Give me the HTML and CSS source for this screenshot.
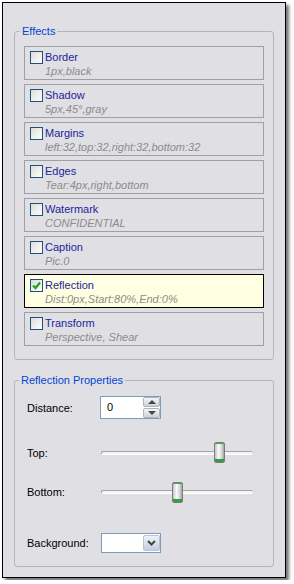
FILE: index.html
```html
<!DOCTYPE html>
<html lang="en">
<head>
  <meta charset="UTF-8" />
  <title>Effects</title>
  <link rel="stylesheet" href="styles.css">
</head>
<body>
  <div class="window">
    <fieldset class="group effects">
      <legend>Effects</legend>

      <div class="effect">
        <span class="check"></span>
        <div class="effect-text">
          <div class="effect-name">Border</div>
          <div class="effect-value">1px,black</div>
        </div>
      </div>

      <div class="effect">
        <span class="check"></span>
        <div class="effect-text">
          <div class="effect-name">Shadow</div>
          <div class="effect-value">5px,45°,gray</div>
        </div>
      </div>

      <div class="effect">
        <span class="check"></span>
        <div class="effect-text">
          <div class="effect-name">Margins</div>
          <div class="effect-value">left:32,top:32,right:32,bottom:32</div>
        </div>
      </div>

      <div class="effect">
        <span class="check"></span>
        <div class="effect-text">
          <div class="effect-name">Edges</div>
          <div class="effect-value">Tear:4px,right,bottom</div>
        </div>
      </div>

      <div class="effect">
        <span class="check"></span>
        <div class="effect-text">
          <div class="effect-name">Watermark</div>
          <div class="effect-value">CONFIDENTIAL</div>
        </div>
      </div>

      <div class="effect">
        <span class="check"></span>
        <div class="effect-text">
          <div class="effect-name">Caption</div>
          <div class="effect-value">Pic.0</div>
        </div>
      </div>

      <div class="effect selected">
        <span class="check checked">
          <svg width="11" height="11" viewBox="0 0 11 11"><path d="M2 5.5 L4.5 8 L9 2.5" fill="none" stroke="#21a121" stroke-width="2.2"/></svg>
        </span>
        <div class="effect-text">
          <div class="effect-name">Reflection</div>
          <div class="effect-value">Dist:0px,Start:80%,End:0%</div>
        </div>
      </div>

      <div class="effect">
        <span class="check"></span>
        <div class="effect-text">
          <div class="effect-name">Transform</div>
          <div class="effect-value">Perspective, Shear</div>
        </div>
      </div>
    </fieldset>

    <fieldset class="group props">
      <legend>Reflection Properties</legend>

      <div class="prop prop-distance">
        <label>Distance:</label>
        <div class="spinner">
          <span class="spin-value">0</span>
          <div class="spin-buttons">
            <span class="spin-btn up"></span>
            <span class="spin-btn down"></span>
          </div>
        </div>
      </div>

      <div class="prop prop-top">
        <label>Top:</label>
        <div class="slider">
          <div class="track"></div>
          <div class="thumb" style="left: 113px;"></div>
        </div>
      </div>

      <div class="prop prop-bottom">
        <label>Bottom:</label>
        <div class="slider">
          <div class="track"></div>
          <div class="thumb" style="left: 71px;"></div>
        </div>
      </div>

      <div class="prop prop-bg">
        <label>Background:</label>
        <div class="dropdown">
          <span class="drop-btn">
            <svg width="9" height="6" viewBox="0 0 9 6"><path d="M1 1 L4.5 4.5 L8 1" fill="none" stroke="#3b4a3b" stroke-width="2"/></svg>
          </span>
        </div>
      </div>
    </fieldset>
  </div>
</body>
</html>
```

FILE: styles.css
```css
* {
  margin: 0;
  padding: 0;
  box-sizing: border-box;
}

body {
  background: #fff;
  font-family: 'Liberation Sans', Arial, sans-serif;
  font-size: 11px;
  color: #000;
}

.window {
  width: 284px;
  height: 576px;
  margin: 2px;
  padding: 0 11px;
  background: #e0dfe3;
  border: 1px solid #000;
  box-shadow: 3px 3px 3px rgba(0, 0, 0, 0.55);
  overflow: hidden;
}

.group {
  border: 1px solid #b5b4ba;
  border-radius: 3px;
}

.group legend {
  color: #0046d5;
  line-height: 14px;
  padding: 0 2px;
}

.effects {
  margin-top: 21px;
  padding: 8px 9px 13px;
}

.effects legend {
  margin-left: -4px;
}

.effect {
  display: flex;
  gap: 2px;
  height: 34px;
  margin-bottom: 4px;
  padding: 3px 5px 0;
  border: 1px solid #a0a0a4;
}

.effect:last-child {
  margin-bottom: 0;
}

.effect.selected {
  background: #ffffe1;
  border-color: #000;
}

.check {
  width: 13px;
  height: 13px;
  margin-top: 1px;
  flex-shrink: 0;
  border: 1px solid #1c5180;
  background: linear-gradient(135deg, #dcdcd7, #fff);
  display: flex;
  align-items: center;
  justify-content: center;
}

.effect-name {
  color: #24249a;
  line-height: 14px;
}

.effect-value {
  color: #8c8c8c;
  font-style: italic;
  line-height: 14px;
  white-space: nowrap;
}

.props {
  margin-top: 13px;
  padding: 9px 12px 13px;
}

.props legend {
  margin-left: -8px;
}

.prop {
  display: flex;
  align-items: center;
}

.prop label {
  width: 73px;
  flex-shrink: 0;
}

.prop-distance { height: 23px; }
.prop-top { height: 21px; margin-top: 23px; }
.prop-bottom { height: 22px; margin-top: 18px; }
.prop-bg { height: 20px; margin-top: 30px; }

.spinner {
  width: 61px;
  height: 23px;
  border: 1px solid #7f9db9;
  background: #fff;
  display: flex;
  justify-content: space-between;
}

.spin-value {
  padding-left: 6px;
  line-height: 21px;
}

.spin-buttons {
  width: 17px;
  display: flex;
  flex-direction: column;
  gap: 1px;
}

.spin-btn {
  height: 10px;
  border: 1px solid #b0b4bc;
  border-radius: 2px;
  background: linear-gradient(#f6f6f6, #cfd1d6);
  display: flex;
  align-items: center;
  justify-content: center;
}

.spin-btn::after {
  content: "";
  border-left: 4px solid transparent;
  border-right: 4px solid transparent;
}

.spin-btn.up::after {
  border-bottom: 4px solid #3e4a3e;
}

.spin-btn.down::after {
  border-top: 4px solid #3e4a3e;
}

.slider {
  position: relative;
  width: 152px;
  height: 21px;
  margin-left: 1px;
  display: flex;
  align-items: center;
}

.track {
  width: 100%;
  height: 4px;
  background: #f4f4f0;
  border-top: 1px solid #a4a4a4;
  border-left: 1px solid #a4a4a4;
  border-bottom: 1px solid #fff;
  border-radius: 2px;
}

.thumb {
  position: absolute;
  top: 0;
  width: 11px;
  height: 21px;
  border: 1px solid #7c7c80;
  border-radius: 2px;
  background: linear-gradient(to right, #c4c4c8, #fbfbfb 40%, #dcdce0 70%, #a4a4a8);
  box-shadow: inset 0 1px 0 #3cae48, inset 0 -3px 0 #2ea23a;
}

.dropdown {
  width: 60px;
  height: 20px;
  margin-left: 1px;
  border: 1px solid #7f9db9;
  background: #fff;
  display: flex;
  justify-content: flex-end;
  padding: 1px 0;
}

.drop-btn {
  width: 17px;
  border: 1px solid #b6c2d8;
  border-radius: 2px;
  background: linear-gradient(#eef1f8, #c3cde2);
  display: flex;
  align-items: center;
  justify-content: center;
}
```
